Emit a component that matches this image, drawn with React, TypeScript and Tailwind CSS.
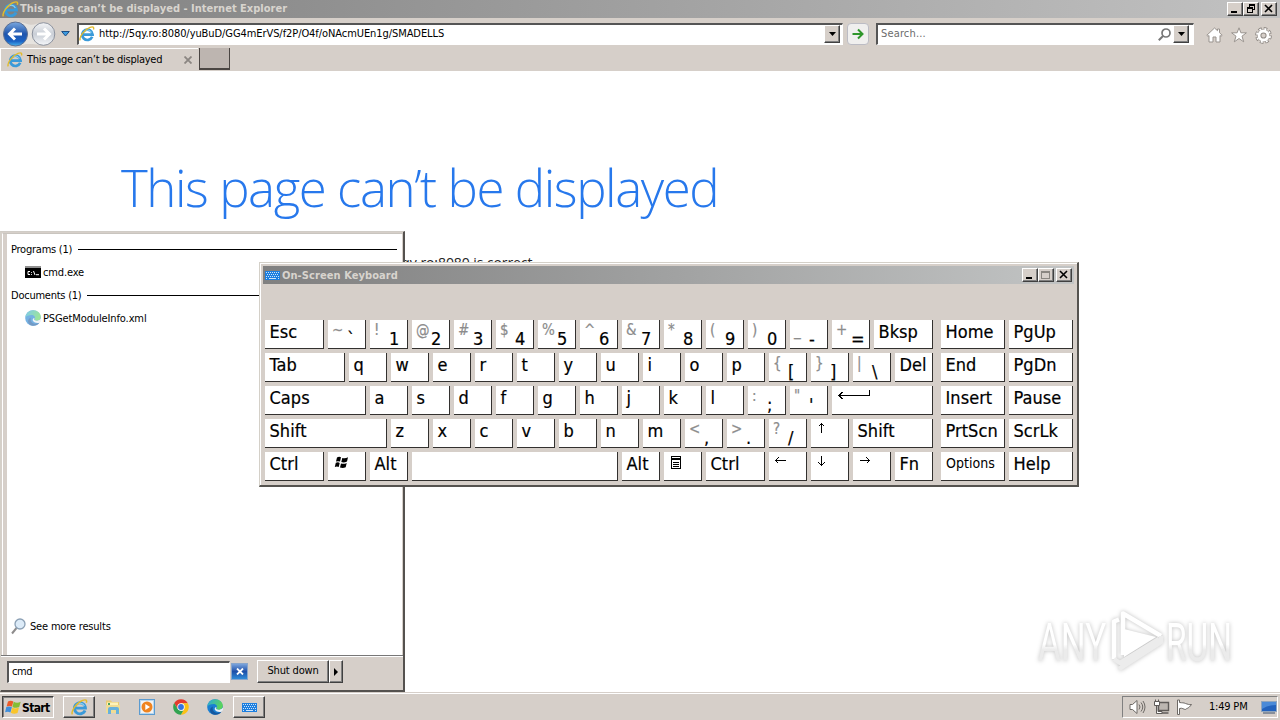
import type { ReactNode } from "react";
import clsx from "clsx";

const FONT = "font-['DejaVu_Sans_Condensed','DejaVu_Sans',sans-serif]";

function IELogo({ size = 16 }: { size?: number }) {
  return (
    <svg width={size} height={size} viewBox="0 0 16 16" fill="none" className="shrink-0">
      <path d="M13.2 10.8A5.2 5.2 0 1 1 13.6 8.6H4.4" stroke="#3a9ad9" strokeWidth="2.7" />
      <path d="M12.6 6.5A4.5 4.5 0 0 0 5 5.8" stroke="#8fd3f5" strokeWidth="1" />
      <path d="M1.3 14.4C-.4 11.5 5.2 3.5 11 1.3c3-1.1 4.3-.2 3.4 2.3" stroke="#e3bb2c" strokeWidth="1.4" />
    </svg>
  );
}

function EdgeLogo({ size = 16, faded }: { size?: number; faded?: boolean }) {
  return (
    <svg width={size} height={size} viewBox="0 0 16 16" className={clsx("shrink-0", faded && "opacity-60")}>
      <defs>
        <linearGradient id="edgeTop" x1="0" y1="0" x2="1" y2="0.4">
          <stop offset="0" stopColor="#2aa7e0" />
          <stop offset="1" stopColor="#5bd45a" />
        </linearGradient>
      </defs>
      <circle cx="8" cy="8" r="7.8" fill="#1a7fd2" />
      <path d="M.3 7.2C1 3 4.2.2 8.2.2c4.5 0 7.6 3.2 7.6 6.5 0 2.500-2 4-4.200 4-1.800 0-2.600-.7-2-1.500 1.200-1.600 0-4.300-3-4.300-3 0-5.200 1-6.300 2.300z" fill="url(#edgeTop)" />
      <path d="M6 7.400c-1.300 3 1 6.600 5 6.400 1.500 0 2.800-.6 3.600-1.200-2.200 3.600-7.200 4.300-10.300 1.600C2 12 3 8.500 6 7.400z" fill="#1558a0" />
      <path d="M9.200 7.800c.3.800 0 1.200-.1 1.800.5 1.400 4 1.600 6.200-.400l.7-.7v2.500l-1.200 1.400c-2 1-5.400.600-6.800-1.400-.8-1.200-.1-2.400 1.200-3.200z" fill="#e8eef4" />
    </svg>
  );
}

function ChromeLogo() {
  return (
    <svg width="16" height="16" viewBox="0 0 16 16">
      <path d="M8 .2a7.8 7.8 0 0 1 6.8 4H8L4.7 9.9 1.2 4.1A7.8 7.8 0 0 1 8 .2z" fill="#e33b2e" />
      <path d="M14.8 4.2A7.8 7.8 0 0 1 7.9 15.8L11.3 9.9 8 4.2z" fill="#fbc116" />
      <path d="M1.2 4.1 4.7 9.9 8 11.8h2.2L7.9 15.8A7.8 7.8 0 0 1 1.2 4.1z" fill="#31a350" />
      <circle cx="8" cy="8" r="3.7" fill="#fff" />
      <circle cx="8" cy="8" r="2.9" fill="#3474e0" />
    </svg>
  );
}

function KeyboardIcon() {
  return (
    <svg width="15" height="9" viewBox="0 0 15 9" className="shrink-0" shapeRendering="crispEdges">
      <rect width="15" height="9" fill="#1c7fe0" />
      <path d="M1 1.500h13M2 3.500h12M1 5.500h13" stroke="#cfe4f8" strokeWidth="1" strokeDasharray="1 1" />
      <path d="M1 7.500h1M4 7.500h7M13 7.500h1" stroke="#cfe4f8" strokeWidth="1" />
    </svg>
  );
}

function WindowsFlag() {
  return (
    <svg width="17" height="16" viewBox="0 0 17 16" className="shrink-0">
      <path d="M3 2.500C5 1.300 6.700 1.500 8.300 2.500L7 7.600C5.300 6.600 3.500 6.700 1.600 7.600z" fill="#ec5a28" />
      <path d="M8.700 2.700c2 1.200 4.500 1.300 7 0L14.200 8.100c-2 1-4.500 1-6.700-.2z" fill="#84bd35" />
      <path d="M1.300 8.100c2-.9 3.800-.9 5.600.1L5.400 13.500c-1.700-1-3.500-1-5.300-.2z" fill="#3f8edb" />
      <path d="M7.300 8.400c2 1.300 4.300 1.300 6.700.2L12.500 14c-2.100 1-4.500 1-6.700-.2z" fill="#f9c52b" />
    </svg>
  );
}

function Raised({ className, children }: { className?: string; children?: ReactNode }) {
  return (
    <div
      className={clsx(
        "flex shrink-0 items-center justify-center border border-t-white border-l-white border-r-[#404040] border-b-[#404040] bg-[#d6cfc9] shadow-[inset_-1px_-1px_0_#808080]",
        className,
      )}
    >
      {children}
    </div>
  );
}

function CaptionButton({ kind, className }: { kind: "min" | "max" | "restore" | "close"; className?: string }) {
  return (
    <Raised className={clsx("h-[14px] w-4", className)}>
      <svg width="12" height="10" viewBox="0 0 12 10" fill="none" shapeRendering="crispEdges">
        {kind === "min" && <path d="M2 8h6" stroke="#000" strokeWidth="2" />}
        {kind === "max" && <path d="M1.500 1.500h8v7h-8zM1 2h9" stroke="#8a8680" />}
        {kind === "restore" && <path d="M4.500 3V.500h5v5H7.500M4 1h6M2.500 3.500h5v5h-5zM2 4h6" stroke="#000" />}
        {kind === "close" && <path d="M2 1l7 7M9 1L2 8" stroke="#000" strokeWidth="1.600" shapeRendering="auto" />}
      </svg>
    </Raised>
  );
}

function DropButton({ className }: { className?: string }) {
  return (
    <Raised className={clsx("h-[18px] w-4", className)}>
      <svg width="7" height="4" viewBox="0 0 7 4"><path d="M0 0h7L3.500 4z" fill="#000" /></svg>
    </Raised>
  );
}

function Browser() {
  return (
    <div className="h-[692px] bg-white">
      <header className="h-[71px] bg-[#d6cfc9]">
        <div className="flex h-[18px] items-center bg-gradient-to-r from-[#808080] to-[#c2c2c2] pr-[3px] pl-[2px]">
          <IELogo size={17} />
          <span className="ml-[1px] pt-px text-[11px] font-bold tracking-[0.01px] whitespace-nowrap text-[#d8d4ce]">
            This page can’t be displayed - Internet Explorer
          </span>
          <div className="ml-auto flex">
            <CaptionButton kind="min" />
            <CaptionButton kind="restore" />
            <CaptionButton kind="close" className="ml-[2px]" />
          </div>
        </div>

        <div className="flex h-[30px] items-center pt-px pl-[2px]">
          <svg width="56" height="28" viewBox="0 0 56 28" fill="none" className="shrink-0">
            <defs>
              <linearGradient id="back" x1="0" y1="0" x2="0" y2="1">
                <stop offset="0" stopColor="#7aa8df" />
                <stop offset=".5" stopColor="#1f55ad" />
                <stop offset=".8" stopColor="#1a62c4" />
                <stop offset="1" stopColor="#48b4ee" />
              </linearGradient>
              <linearGradient id="fwd" x1="0" y1="0" x2="0" y2="1">
                <stop offset="0" stopColor="#f4f5f7" />
                <stop offset=".5" stopColor="#c9ced6" />
                <stop offset="1" stopColor="#f5f7fa" />
              </linearGradient>
            </defs>
            <path d="M13 1.500c6 0 9 2 14 3s8-1.500 14-1.500v22c-6 0-8-1-14-1s-8 2-14 2z" fill="#e6e3df" />
            <circle cx="13.500" cy="14" r="12" fill="url(#back)" stroke="#5b6f92" />
            <path d="M20 14H8M13 8.500 7.500 14l5.500 5.500" stroke="#fff" strokeWidth="3" />
            <circle cx="41.500" cy="14" r="11.300" fill="url(#fwd)" stroke="#8c929e" />
            <path d="M35 14h12M42 8.500l5.500 5.500-5.500 5.500" stroke="#fff" strokeWidth="3" />
          </svg>
          <svg width="9" height="6" viewBox="0 0 9 6" className="ml-[3px] shrink-0">
            <path d="M.700.500h7.600L4.500 5z" fill="#3c9be0" stroke="#1d4f86" />
          </svg>
          <div className="ml-[7px] flex h-[22px] w-[766px] shrink-0 items-center border-t-2 border-r border-b border-l-2 border-t-[#555] border-r-white border-b-white border-l-[#555] bg-white">
            <IELogo />
            <span className="ml-1 pt-px text-[11px] tracking-[-0.075px] whitespace-nowrap text-black">
              http://5qy.ro:8080/yuBuD/GG4mErVS/f2P/O4f/oNAcmUEn1g/SMADELLS
            </span>
            <DropButton className="mr-[2px] ml-auto" />
          </div>
          <div className="ml-1 flex size-[22px] shrink-0 items-center justify-center rounded-sm border border-[#bcbcc4] bg-[#f0efee]">
            <svg width="12" height="12" viewBox="0 0 12 12" fill="none">
              <path d="M.500 6h10M6 1.500 10.500 6 6 10.500" stroke="#2f962b" strokeWidth="2" />
            </svg>
          </div>
          <div className="ml-[7px] flex h-[22px] w-[318px] shrink-0 items-center border-t-2 border-r border-b border-l-2 border-t-[#555] border-r-white border-b-white border-l-[#555] bg-white pl-[3px]">
            <span className="pt-px text-[11px] tracking-[0.15px] text-[#6c6c6c]">Search...</span>
            <svg width="13" height="13" viewBox="0 0 13 13" fill="none" className="ml-auto">
              <circle cx="8" cy="5" r="4" stroke="#777" strokeWidth="1.700" />
              <path d="M5 8 .800 12.200" stroke="#777" strokeWidth="2" />
            </svg>
            <DropButton className="mr-1 ml-[2px]" />
          </div>
          <div className="ml-3 flex items-center gap-2 pt-[3px]">
            <svg width="17" height="16" viewBox="0 0 17 16" fill="#fff" stroke="#99938e">
              <path d="M8.500 1 .800 8.300l1.200 1L3 8.500V15h4v-5h3v5h4V8.500l1 .8 1.200-1-2.700-2.600V2h-2v1.700z" />
            </svg>
            <svg width="16" height="16" viewBox="0 0 16 16" fill="#fff" stroke="#99938e">
              <path d="m8 .800 1.900 5H15.400L11 9.200l1.700 5.600L8 11.500l-4.700 3.300L5 9.200.600 5.800h5.500z" />
            </svg>
            <svg width="17" height="17" viewBox="0 0 17 17" fill="none">
              <circle cx="8.500" cy="8.500" r="6.900" stroke="#928c87" strokeWidth="3" strokeDasharray="3.500 1.920" />
              <circle cx="8.500" cy="8.500" r="4.300" stroke="#928c87" strokeWidth="4.400" />
              <circle cx="8.500" cy="8.500" r="6.600" stroke="#fff" strokeWidth="1.800" strokeDasharray="2 3.184" strokeDashoffset="-.700" />
              <circle cx="8.500" cy="8.500" r="4.500" stroke="#fff" strokeWidth="2.800" />
            </svg>
          </div>
        </div>

        <div className="flex h-[23px]">
          <div className="flex w-[198px] items-center border-t border-l border-white pl-[6px]">
            <IELogo />
            <span className="ml-1 pt-px text-[11px] tracking-[-0.25px] whitespace-nowrap text-black">This page can’t be displayed</span>
            <svg width="8" height="8" viewBox="0 0 8 8" className="mr-[6px] ml-auto">
              <path d="m.500.500 7 7m0-7-7 7" stroke="#8b8682" strokeWidth="1.800" />
            </svg>
          </div>
          <div className="ml-px h-[22px] w-[31px] border-r border-b-2 border-l border-[#4a4542] bg-[#bdb5b0]" />
        </div>
      </header>

      <main>
        <h1 className="pt-[82px] pl-[121px] font-['Open_Sans',sans-serif] text-[51px] leading-[68px] font-light tracking-[-1.44px] whitespace-nowrap text-[#2778ec]">
          This page can’t be displayed
        </h1>
        <p className="mt-[32px] w-[536px] text-right font-['Open_Sans',sans-serif] text-[14px] leading-5 tracking-[-0.08px] whitespace-nowrap text-[#222]">
          • Make sure the web address http://5qy.ro:8080 is correct.
        </p>
      </main>
    </div>
  );
}

function ResultGroup({ title, children }: { title: string; children: ReactNode }) {
  return (
    <section className="h-[46px] text-[11px] text-black">
      <div className="flex h-[22px] items-center gap-[6px] pr-[5px] pl-1">
        <span className="pt-[2px] tracking-[-0.24px] whitespace-nowrap">{title}</span>
        <span className="h-px flex-1 bg-black" />
      </div>
      <div className="flex h-6 items-center gap-[2px] pl-[18px]">{children}</div>
    </section>
  );
}

function StartMenu() {
  return (
    <div className="absolute top-[231px] left-0 flex h-[461px] w-[405px] flex-col border-t border-r-2 border-b-2 border-l border-t-[#d0ccc6] border-r-[#55524f] border-b-[#55524f] border-l-[#d4d0c8] bg-[#d6cfc9]">
      <div className="mt-px ml-px flex h-[422px] flex-col border-t border-l border-t-[#c9c5bf] border-l-white pr-px pl-1">
        <div className="flex flex-1 flex-col bg-white pt-1">
          <ResultGroup title="Programs (1)">
            <svg width="16" height="12" viewBox="0 0 16 12">
              <rect width="16" height="12" fill="#8f8f8f" />
              <rect y="2" width="16" height="10" fill="#000" />
              <path d="M5 5.500H3v3h2M6.500 6v.8m0 1.200v.8M8.500 5l1.500 4M11 8.700h3" stroke="#fff" fill="none" />
            </svg>
            <span className="pt-[2px] tracking-[-0.15px]">cmd.exe</span>
          </ResultGroup>
          <ResultGroup title="Documents (1)">
            <EdgeLogo faded />
            <span className="pt-[2px] tracking-[-0.12px]">PSGetModuleInfo.xml</span>
          </ResultGroup>
          <div className="mt-auto mb-[20px] flex items-center gap-1 pl-1 text-[11px] tracking-[-0.18px] text-black">
            <svg width="15" height="17" viewBox="0 0 15 17" fill="none">
              <path d="M5.500 10 1 15.500" stroke="#8e8c8c" strokeWidth="2" />
              <circle cx="9" cy="6" r="5" fill="#dcebf8" stroke="#8ba0b5" strokeWidth="1.300" />
            </svg>
            <span className="pt-px">See more results</span>
          </div>
        </div>
      </div>
      <div className="flex flex-1 items-center border-t border-[#777] pb-[3px] pl-[6px] shadow-[inset_0_1px_0_#fff]">
        <div className="flex h-[22px] w-[223px] items-center border-t-2 border-r border-b border-l-2 border-t-[#555] border-r-white border-b-white border-l-[#555] bg-white pl-[3px] text-[11px] tracking-[-0.4px] text-black">
          cmd
        </div>
        <div className="ml-px flex size-[17px] items-center justify-center border border-[#87a5cc] bg-gradient-to-b from-[#7ba4dc] via-[#1e4fa8] to-[#2f8bd8]">
          <svg width="8" height="7" viewBox="0 0 8 7"><path d="m1 .500 6 6m0-6-6 6" stroke="#fff" strokeWidth="1.800" /></svg>
        </div>
        <Raised className="ml-[9px] h-[23px] w-[72px]">
          <span className="text-[11px] tracking-[-0.15px] whitespace-nowrap text-black">Shut down</span>
        </Raised>
        <Raised className="h-[23px] w-[14px]">
          <svg width="4" height="8" viewBox="0 0 4 8"><path d="M0 0v8l4-4z" fill="#000" /></svg>
        </Raised>
      </div>
    </div>
  );
}

type KeyDef = { label?: ReactNode; shift?: string; w?: string; small?: boolean };

const k = (label: ReactNode, w?: string): KeyDef => ({ label, w });
const s = (shift: string, label: string): KeyDef => ({ shift, label });

const arrow = (d: string) => (
  <svg width="12" height="12" viewBox="0 0 12 12" fill="none" className="mt-[3px]" shapeRendering="crispEdges">
    <path d={d} stroke="#000" />
  </svg>
);

const winKey = (
  <svg width="15" height="13" viewBox="0 0 15 13" className="mt-[4px] ml-px">
    <path d="M3 1.500Q5 .200 7 1.300L6 5.600Q4 4.700 2 5.600zM8.300 1.900Q11 2.900 14 1.300L13 5.600Q10 7 7.300 6.100zM1.800 6.800Q4 5.900 5.700 6.900L4.700 11Q3 10 .800 11zM7 7.400Q10 8.400 12.700 6.900L11.700 11.200Q9 12.500 6 11.500z" />
  </svg>
);

const menuKey = (
  <svg width="12" height="13" viewBox="0 0 12 13" fill="none" className="mt-[4px] ml-px" shapeRendering="crispEdges">
    <path d="M1.500.500h9v12h-9zM1 2h10M1 3.500h10M3 6.500h6M3 8.500h6M3 10.500h6" stroke="#000" />
  </svg>
);

const enterKey = (
  <svg width="34" height="10" viewBox="0 0 34 10" fill="none" className="mt-[3px] ml-px" shapeRendering="crispEdges">
    <path d="M1 6.500h30.500V1M4.500 3l-3.500 3.500 3.500 3.500" stroke="#000" />
  </svg>
);

const ROWS: KeyDef[][] = [
  [
    k("Esc", "w-[59px]"), s("~", "`"), s("!", "1"), s("@", "2"), s("#", "3"), s("$", "4"), s("%", "5"), s("^", "6"),
    s("&", "7"), s("*", "8"), s("(", "9"), s(")", "0"), s("_", "-"), s("+", "="), k("Bksp", "w-[59px]"),
  ],
  [
    k("Tab", "w-20"), ..."qwertyuiop".split("").map((c) => k(c)),
    s("{", "["), s("}", "]"), s("|", "\\"), k("Del"),
  ],
  [
    k("Caps", "w-[101px]"), ..."asdfghjkl".split("").map((c) => k(c)),
    s(":", ";"), s("\"", "'"), k(enterKey, "w-[101px]"),
  ],
  [
    k("Shift", "w-[122px]"), ..."zxcvbnm".split("").map((c) => k(c)),
    s("<", ","), s(">", "."), s("?", "/"),
    k(arrow("M5.500 1.500v9M2.500 4.500l3-3 3 3")), k("Shift", "w-20"),
  ],
  [
    k("Ctrl", "w-[59px]"), k(winKey), k("Alt"), k("", "w-[206px]"), k("Alt"), k(menuKey), k("Ctrl", "w-[59px]"),
    k(arrow("M1.500 5.500h10M4.500 2.500l-3 3 3 3")), k(arrow("M5.500.500v10M2.500 7.500l3 3 3-3")),
    k(arrow("M1.500 5.500h10M8.500 2.500l3 3-3 3")), k("Fn"),
  ],
];

const SIDE = [["Home", "PgUp"], ["End", "PgDn"], ["Insert", "Pause"], ["PrtScn", "ScrLk"], ["Options", "Help"]];

function Key({ label, shift, w = "w-[38px]", small }: KeyDef) {
  return (
    <div className={clsx("flex h-[29px] shrink-0 overflow-hidden border-r border-b border-[#33312f] bg-white whitespace-nowrap text-black", w)}>
      {shift ? (
        <>
          <span className="w-[18px] shrink-0 pl-1 text-[15px] leading-[21px] text-[#8c8c8c] [-webkit-text-stroke:0.2px_#8c8c8c]">{shift}</span>
          <span className="pt-[6px] pl-px text-[18px] leading-[25px] [-webkit-text-stroke:0.2px_#000]">{label}</span>
        </>
      ) : (
        <span
          className={clsx(
            small
              ? "pl-[5px] text-[14px] leading-[22px] tracking-[0.02px]"
              : "pl-[4.5px] text-[18px] leading-[23px] tracking-[0.05px] [-webkit-text-stroke:0.2px_#000]",
          )}
        >
          {label}
        </span>
      )}
    </div>
  );
}

function OnScreenKeyboard() {
  return (
    <div className="absolute top-[262px] left-[259px] h-[225px] w-[820px] border-t border-r-2 border-b-2 border-l border-t-[#d4d0c8] border-r-[#55534f] border-b-[#55534f] border-l-[#d4d0c8] bg-[#d6cfc9] shadow-[inset_1px_1px_0_#fff]">
      <div className="mx-[3px] mt-[3px] flex h-[18px] items-center bg-gradient-to-r from-[#808080] to-[#c2c4c4] pr-px pl-[2px]">
        <KeyboardIcon />
        <span className="ml-[2px] pt-[2px] text-[11px] font-bold tracking-[0.08px] text-[#d8d4ce]">On-Screen Keyboard</span>
        <div className="mr-px ml-auto flex">
          <CaptionButton kind="min" />
          <CaptionButton kind="max" />
          <CaptionButton kind="close" className="ml-[2px]" />
        </div>
      </div>
      <div className="mt-9 ml-[5px] flex flex-col gap-1">
        {ROWS.map((row, i) => (
          <div key={i} className="flex gap-1">
            {row.map((key, j) => (
              <Key key={j} {...key} />
            ))}
            <div className="ml-1 flex gap-1">
              {SIDE[i].map((label) => (
                <Key key={label} label={label} w="w-16" small={label === "Options"} />
              ))}
            </div>
          </div>
        ))}
      </div>
    </div>
  );
}

function Watermark() {
  return (
    <div className="absolute top-[608px] left-[1038px] flex h-[66px] w-[196px] items-center font-['Roboto',sans-serif] text-[53px] leading-none drop-shadow-[0_0_2px_rgba(0,0,0,0.25)]">
      <div className="w-[70px] shrink-0">
        <span className="inline-block w-max origin-left scale-x-[0.66] bg-gradient-to-b from-white from-55% to-[#ebebeb] to-65% bg-clip-text pt-1 text-transparent">
          ANY
        </span>
      </div>
      <svg width="58" height="64" viewBox="0 0 58 64" fill="none" strokeWidth="4.500" strokeLinejoin="round" className="shrink-0">
        <path d="M15 46V4.500l38 22.500" stroke="#fff" />
        <path d="M11 10.500l-5 2V50" stroke="#fff" />
        <path d="M16 20v28l32-20z" stroke="none" fill="#fff" />
        <path d="M6 50l6 4 39-24M11 60l42-27V27" stroke="#ececec" />
      </svg>
      <div className="w-[66px] shrink-0">
        <span className="inline-block w-max origin-left scale-x-[0.63] bg-gradient-to-b from-white from-55% to-[#ebebeb] to-65% bg-clip-text pt-1 text-transparent">
          RUN
        </span>
      </div>
    </div>
  );
}

function Taskbar() {
  return (
    <footer className="flex h-7 items-center border-t border-[#d6cfc9] bg-[#d6cfc9] pt-px pr-[2px] pl-[2px] shadow-[inset_0_1px_0_#fff]">
      <div className="flex h-[22px] w-[52px] items-center border border-t-[#404040] border-l-[#404040] border-r-white border-b-white pl-[2px] shadow-[inset_1px_1px_0_#808080]">
        <WindowsFlag />
        <span className="pt-px text-[12px] font-bold tracking-[-0.65px] text-black">Start</span>
      </div>
      <Raised className="ml-[9px] h-[22px] w-8"><IELogo size={17} /></Raised>
      <svg width="16" height="16" viewBox="0 0 16 16" className="ml-[10px]">
        <path d="M1 1.500h5l1 1.500h7V14H1z" fill="#e9cb74" />
        <path d="M2 3.500h11v5H2z" fill="#fff3b8" />
        <path d="M1 6h14v8H1z" fill="#f0dc94" />
        <path d="M3 15V10q0-2 2-2h7q2 0 2 2v5h-3V11H6v4z" fill="#67b1dc" />
        <path d="M3 4h2v2H3z" fill="#49a25d" />
      </svg>
      <svg width="16" height="16" viewBox="0 0 16 16" className="ml-[18px]">
        <rect x=".500" y=".500" width="15" height="15" fill="#b9d8ef" stroke="#5b9bd0" />
        <rect x="2" y="2" width="12" height="12" fill="#f3f3f3" />
        <circle cx="8" cy="8" r="5.500" fill="#ef8420" />
        <path d="M6.300 5v6l4.700-3z" fill="#fff" />
      </svg>
      <div className="ml-[18px]"><ChromeLogo /></div>
      <div className="ml-[18px]"><EdgeLogo /></div>
      <Raised className="ml-[10px] h-[22px] w-8">
        <KeyboardIcon />
      </Raised>

      <div className="ml-auto flex h-[22px] w-[156px] items-center border border-t-[#808080] border-l-[#808080] border-r-white border-b-white pl-[6px]">
        <svg width="17" height="16" viewBox="0 0 17 16" fill="none" stroke="#6d6965">
          <path d="M1 5.500h2.500L8 1.500v13l-4.500-4H1z" fill="#fff" />
          <path d="M10 5.500q2 2.500 0 5M12 3.500q3.500 4.500 0 9M14 2q4 6 0 12" />
        </svg>
        <svg width="17" height="16" viewBox="0 0 17 16" fill="none" stroke="#5f5b58" className="ml-[7px]">
          <path d="M5.500 3.500h10v8h-10zM8 14h7.500" fill="#bcb6b0" strokeWidth="1.400" />
          <path d="M1.500 2.500h5v4h-5zM2.500 2.500v-2m3 2v-2M3.500 6.500h1.500v6h4v2H3.500z" fill="#fff" />
        </svg>
        <svg width="17" height="16" viewBox="0 0 17 16" stroke="#6d6965" className="ml-[6px]">
          <path d="M1.500 1v14.500h2V9.500c3-1 4 1 6 1 0-1 3-.5 6-5-2.500.5-4-.500-6-1-2-1-3-.500-6-1V1z" fill="#fff" />
        </svg>
        <span className="ml-[16px] pt-px text-[11px] tracking-[-0.2px] whitespace-nowrap text-black">1:49 PM</span>
        <svg width="16" height="13" viewBox="0 0 16 13" className="ml-auto">
          <rect x=".500" y=".500" width="15" height="10" fill="#2262bd" stroke="#8fa5bd" />
          <path d="M1 1h14v3Q7 4 1 8z" fill="#4a8ad8" />
          <path d="M2 12h12" stroke="#38506f" />
        </svg>
      </div>
    </footer>
  );
}

export default function App() {
  return (
    <div className={clsx("relative h-[720px] w-[1280px] overflow-hidden", FONT)}>
      <Browser />
      <Taskbar />
      <StartMenu />
      <OnScreenKeyboard />
      <Watermark />
    </div>
  );
}
